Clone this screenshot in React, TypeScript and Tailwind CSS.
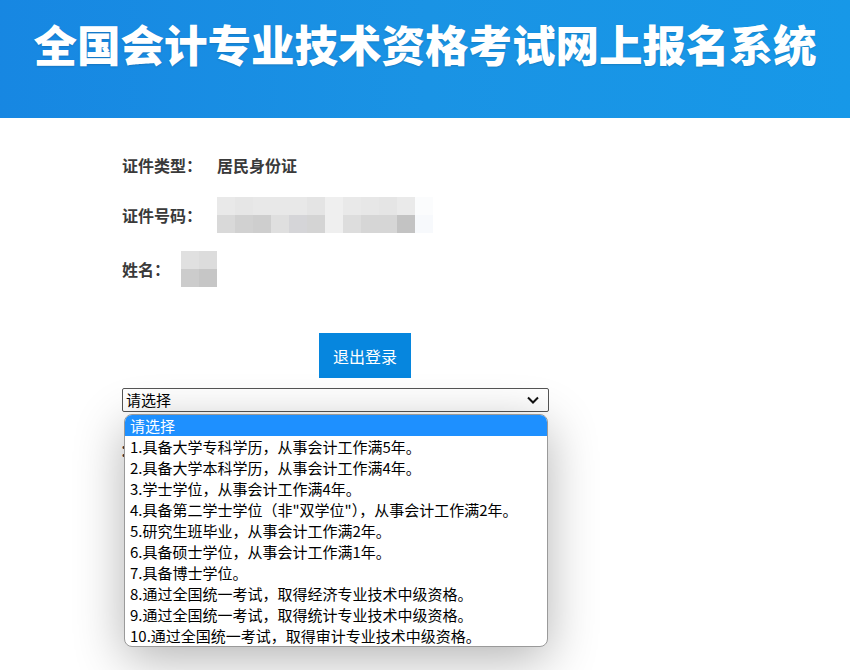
import React from "react";

const options = [
  "请选择",
  "1.具备大学专科学历，从事会计工作满5年。",
  "2.具备大学本科学历，从事会计工作满4年。",
  "3.学士学位，从事会计工作满4年。",
  "4.具备第二学士学位（非\"双学位\"），从事会计工作满2年。",
  "5.研究生班毕业，从事会计工作满2年。",
  "6.具备硕士学位，从事会计工作满1年。",
  "7.具备博士学位。",
  "8.通过全国统一考试，取得经济专业技术中级资格。",
  "9.通过全国统一考试，取得统计专业技术中级资格。",
  "10.通过全国统一考试，取得审计专业技术中级资格。",
];

// pixelated blur of the ID number / name
const idTop = ["#e9e9e9", "#e6e6e6", "#e8e8e8", "#e8e8e8", "#e8e8e8", "#e4e4e4", "#efefef", "#e9e9e9", "#e7e7e7", "#e5e5e5", "#eaeaea", "#fbfcfd"];
const idBottom = ["#d9d9d9", "#d1d1d1", "#cecece", "#dfdfdf", "#d5d5d8", "#d4d4d4", "#efefef", "#dddddd", "#d6d6d6", "#d6d6d6", "#c3c3c3", "#f7f9fc"];

function Mosaic({ top, bottom }: { top: string[]; bottom: string[] }) {
  return (
    <div className="flex flex-col">
      <div className="flex">
        {top.map((c, i) => (
          <span key={i} className="block h-[18px] w-[18px]" style={{ background: c }} />
        ))}
      </div>
      <div className="flex">
        {bottom.map((c, i) => (
          <span key={i} className="block h-[18px] w-[18px]" style={{ background: c }} />
        ))}
      </div>
    </div>
  );
}

export default function App() {
  return (
    <div
      className="relative h-[670px] w-[850px] overflow-hidden bg-white"
      style={{ fontFamily: '"Noto Sans CJK SC", "Noto Sans", sans-serif' }}
    >
      <header className="flex h-[118px] justify-center bg-gradient-to-r from-[#1787e2] via-[#1a93e4] to-[#1798e8] pt-[15px]">
        <h1 className="text-[43.5px] font-black leading-[58px] text-white [text-shadow:0_1px_2px_rgba(0,0,0,0.15)]">
          全国会计专业技术资格考试网上报名系统
        </h1>
      </header>

      <div className="pl-[122px] pt-[33px] text-[16px] font-bold text-[#3a3a3a]">
        <div className="flex h-[28px] items-center">
          <span className="w-[95px]">证件类型：</span>
          <span>居民身份证</span>
        </div>
        <div className="mt-[18px] flex h-[36px] items-center">
          <span className="w-[95px]">证件号码：</span>
          <Mosaic top={idTop} bottom={idBottom} />
        </div>
        <div className="mt-[18px] flex h-[36px] items-center">
          <span className="w-[59px]">姓名：</span>
          <Mosaic top={["#e0e0e0", "#dcdcdc"]} bottom={["#cccccc", "#c6c6c6"]} />
        </div>
      </div>

      <div className="mt-[46px] flex w-[730px] justify-center">
        <button className="h-[45px] w-[92px] bg-[#0686de] text-[16px] font-normal text-white">退出登录</button>
      </div>

      <div className="ml-[122px] mt-[10px] flex h-[24px] w-[427px] items-center justify-between rounded-[2px] border border-[#555] bg-white pl-[3px] pr-[8px] text-[15px] text-black">
        <span>请选择</span>
        <svg width="14" height="10" viewBox="0 0 14 10">
          <path d="M2 2.5 L7 7.5 L12 2.5" fill="none" stroke="#111" strokeWidth="2" />
        </svg>
      </div>
      <div className="ml-[120px] mt-[26px] text-[16px] font-bold text-[#3a3a3a]">：</div>

      <div className="absolute left-[124px] top-[414px] w-[424px] overflow-hidden rounded-[8px] border border-[#9a9a9a] bg-white shadow-[0_12px_50px_rgba(0,0,0,0.3)]">
        {options.map((o, i) => (
          <div
            key={i}
            className={`h-[21px] whitespace-nowrap pl-[5px] text-[15px] leading-[21px] ${i === 0 ? "bg-[#1e90ff] text-white" : "text-black"}`}
          >
            {o}
          </div>
        ))}
      </div>
    </div>
  );
}
